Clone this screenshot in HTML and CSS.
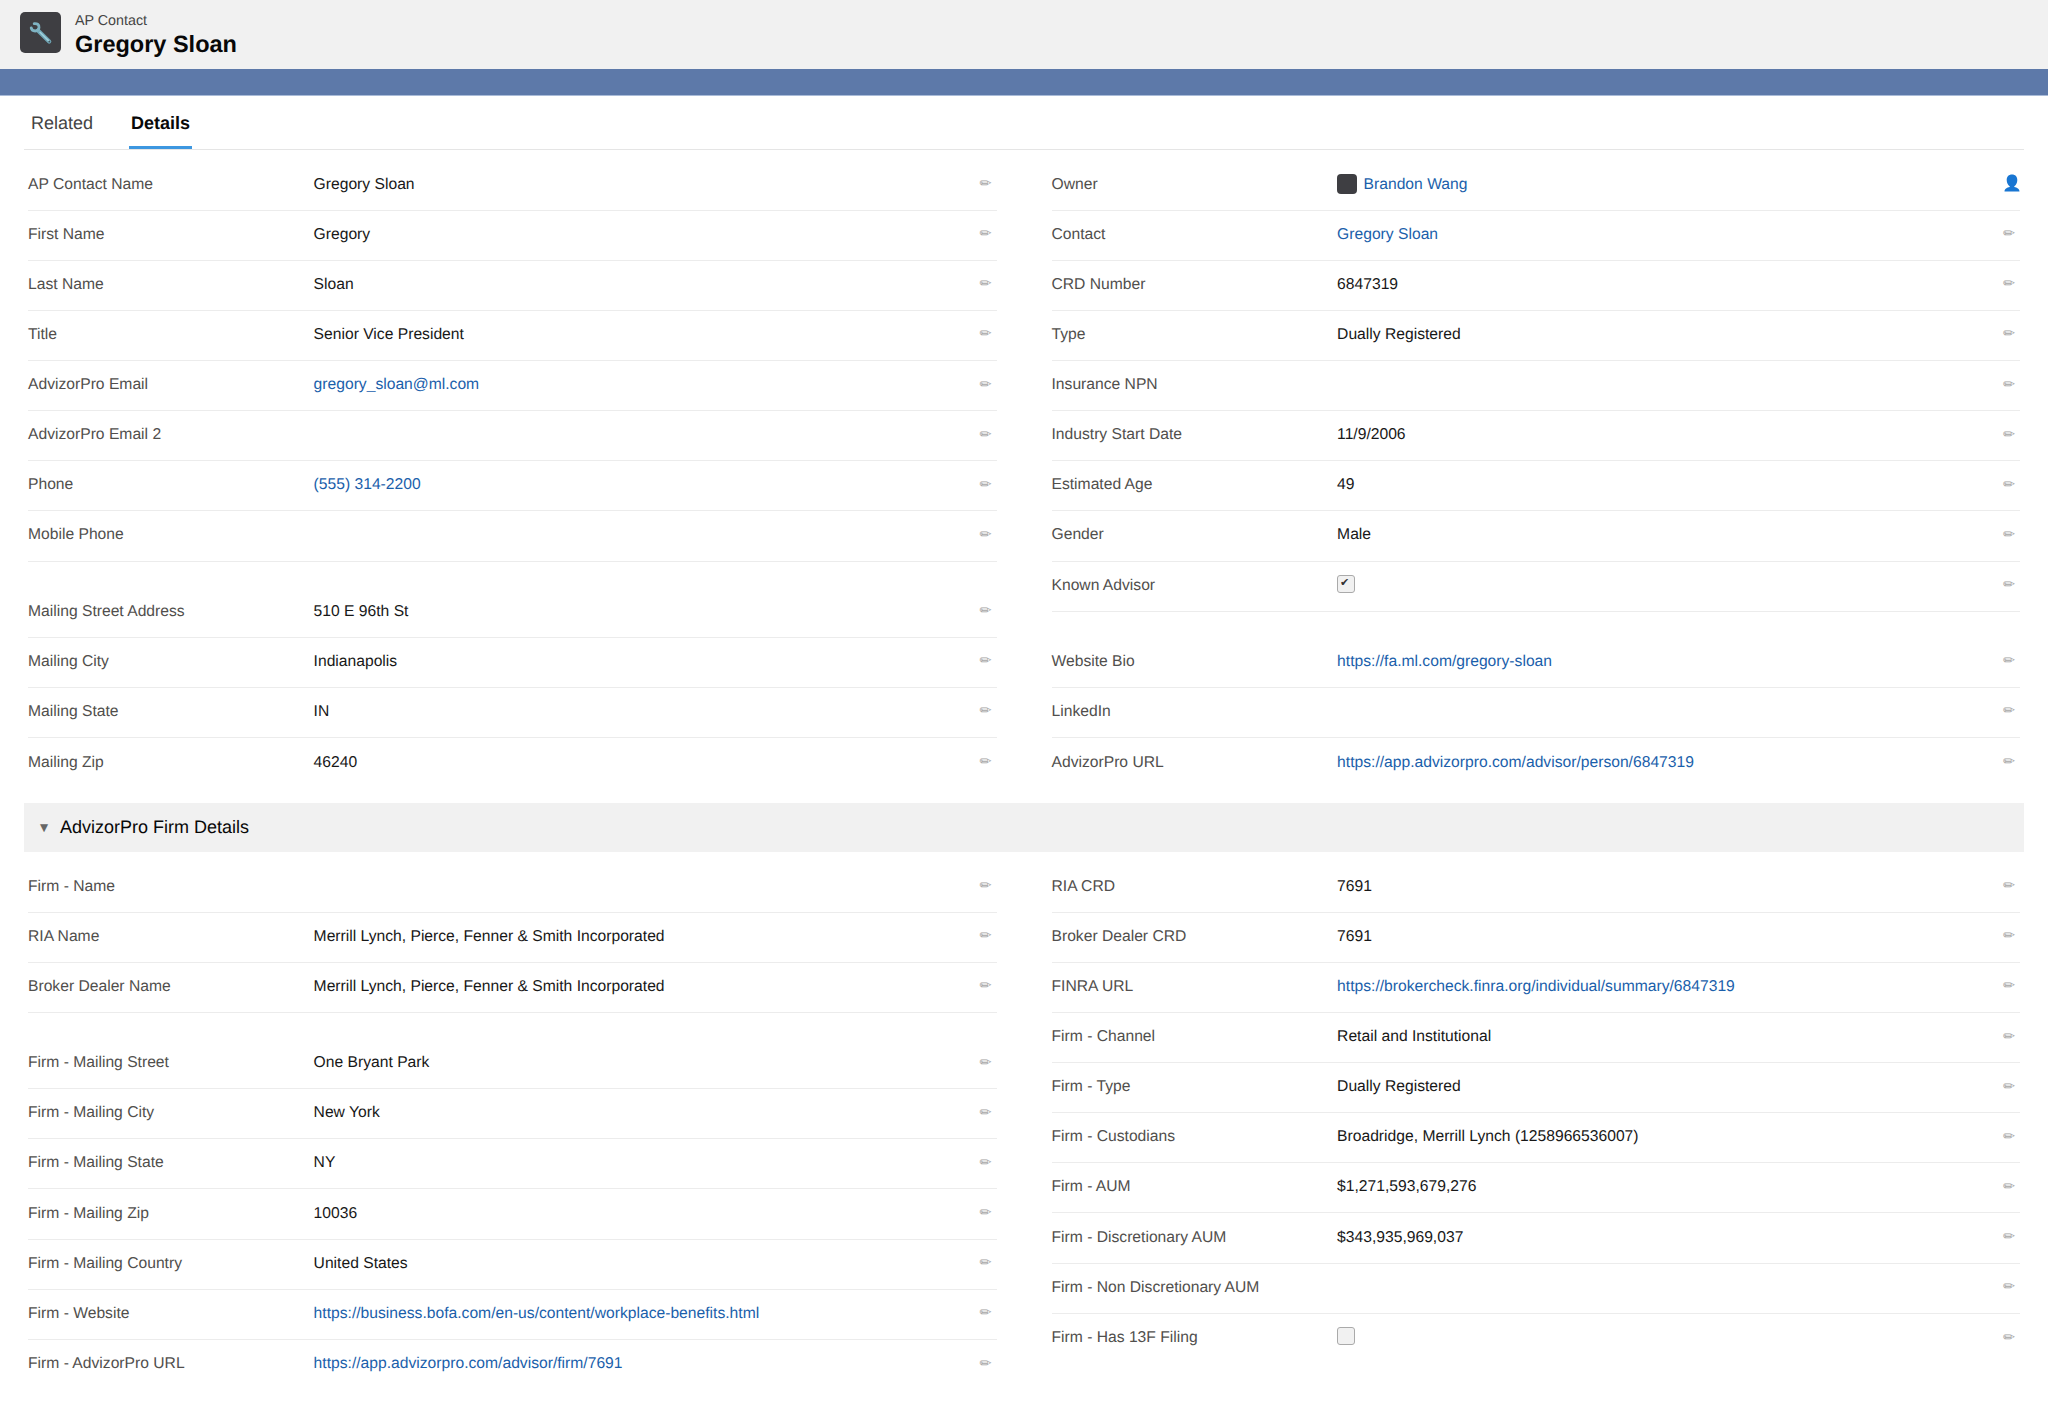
FILE: index.html
```html
<!DOCTYPE html>
<html lang="en">
<head>
  <meta charset="UTF-8" />
  <meta name="viewport" content="width=device-width, initial-scale=1.0" />
  <title>Gregory Sloan | AP Contact</title>
  <link rel="stylesheet" href="styles.css">
</head>
<body>
  <header class="page-header">
    <div class="header-icon">
      <svg viewBox="0 0 24 24" width="24" height="24">
        <path d="M9 9.5 L20.2 20.5" stroke="#6fa5b5" stroke-width="4.2" stroke-linecap="round" />
        <path d="M11 11.3 L19.5 19.6" stroke="#9fd0dc" stroke-width="1.5" stroke-linecap="round" />
        <path d="M5.2 2.6 Q10.2 2.2 10 6.6 Q9.6 10 6.2 10 Q2.6 9.8 2.2 6.8" fill="none" stroke="#7fb4c3" stroke-width="2.8" stroke-linecap="round" />
        <circle cx="20.3" cy="20.6" r="0.9" fill="#45555c" />
      </svg>
    </div>
    <div>
      <div class="header-type">AP Contact</div>
      <h1>Gregory Sloan</h1>
    </div>
  </header>
  <div class="banner"></div>

  <main>
    <nav class="tabs">
      <a class="tab">Related</a>
      <a class="tab active">Details</a>
    </nav>

    <section class="columns">
      <div class="column">
        <div class="row"><span class="label">AP Contact Name</span><span class="value">Gregory Sloan</span><span class="edit">✏</span></div>
        <div class="row"><span class="label">First Name</span><span class="value">Gregory</span><span class="edit">✏</span></div>
        <div class="row"><span class="label">Last Name</span><span class="value">Sloan</span><span class="edit">✏</span></div>
        <div class="row"><span class="label">Title</span><span class="value">Senior Vice President</span><span class="edit">✏</span></div>
        <div class="row"><span class="label">AdvizorPro Email</span><a class="value">gregory_sloan@ml.com</a><span class="edit">✏</span></div>
        <div class="row"><span class="label">AdvizorPro Email 2</span><span class="value"></span><span class="edit">✏</span></div>
        <div class="row"><span class="label">Phone</span><a class="value">(555) 314-2200</a><span class="edit">✏</span></div>
        <div class="row"><span class="label">Mobile Phone</span><span class="value"></span><span class="edit">✏</span></div>
        <div class="spacer"></div>
        <div class="row"><span class="label">Mailing Street Address</span><span class="value">510 E 96th St</span><span class="edit">✏</span></div>
        <div class="row"><span class="label">Mailing City</span><span class="value">Indianapolis</span><span class="edit">✏</span></div>
        <div class="row"><span class="label">Mailing State</span><span class="value">IN</span><span class="edit">✏</span></div>
        <div class="row"><span class="label">Mailing Zip</span><span class="value">46240</span><span class="edit">✏</span></div>
      </div>
      <div class="column">
        <div class="row">
          <span class="label">Owner</span><a class="value owner"><span class="avatar"></span>Brandon Wang</a>
          <svg class="user-icon" viewBox="0 0 16 18" width="16" height="18">
            <path d="M8 0.5 C11.3 0.5 13.3 2.7 13.3 6 C13.3 8.8 12 11.2 10.3 12.2 L10.3 13 C13 13.6 15.5 14.6 15.5 17.6 L0.5 17.6 C0.5 14.6 3 13.6 5.7 13 L5.7 12.2 C4 11.2 2.7 8.8 2.7 6 C2.7 2.7 4.7 0.5 8 0.5 Z" fill="#1976d2" />
          </svg>
        </div>
        <div class="row"><span class="label">Contact</span><a class="value">Gregory Sloan</a><span class="edit">✏</span></div>
        <div class="row"><span class="label">CRD Number</span><span class="value">6847319</span><span class="edit">✏</span></div>
        <div class="row"><span class="label">Type</span><span class="value">Dually Registered</span><span class="edit">✏</span></div>
        <div class="row"><span class="label">Insurance NPN</span><span class="value"></span><span class="edit">✏</span></div>
        <div class="row"><span class="label">Industry Start Date</span><span class="value">11/9/2006</span><span class="edit">✏</span></div>
        <div class="row"><span class="label">Estimated Age</span><span class="value">49</span><span class="edit">✏</span></div>
        <div class="row"><span class="label">Gender</span><span class="value">Male</span><span class="edit">✏</span></div>
        <div class="row"><span class="label">Known Advisor</span><span class="value"><span class="checkbox">✔</span></span><span class="edit">✏</span></div>
        <div class="spacer"></div>
        <div class="row"><span class="label">Website Bio</span><a class="value">https://fa.ml.com/gregory-sloan</a><span class="edit">✏</span></div>
        <div class="row"><span class="label">LinkedIn</span><span class="value"></span><span class="edit">✏</span></div>
        <div class="row"><span class="label">AdvizorPro URL</span><a class="value">https://app.advizorpro.com/advisor/person/6847319</a><span class="edit">✏</span></div>
      </div>
    </section>

    <h2 class="section-title"><span class="arrow">▼</span>AdvizorPro Firm Details</h2>

    <section class="columns">
      <div class="column">
        <div class="row"><span class="label">Firm - Name</span><span class="value"></span><span class="edit">✏</span></div>
        <div class="row"><span class="label">RIA Name</span><span class="value">Merrill Lynch, Pierce, Fenner &amp; Smith Incorporated</span><span class="edit">✏</span></div>
        <div class="row"><span class="label">Broker Dealer Name</span><span class="value">Merrill Lynch, Pierce, Fenner &amp; Smith Incorporated</span><span class="edit">✏</span></div>
        <div class="spacer"></div>
        <div class="row"><span class="label">Firm - Mailing Street</span><span class="value">One Bryant Park</span><span class="edit">✏</span></div>
        <div class="row"><span class="label">Firm - Mailing City</span><span class="value">New York</span><span class="edit">✏</span></div>
        <div class="row"><span class="label">Firm - Mailing State</span><span class="value">NY</span><span class="edit">✏</span></div>
        <div class="row"><span class="label">Firm - Mailing Zip</span><span class="value">10036</span><span class="edit">✏</span></div>
        <div class="row"><span class="label">Firm - Mailing Country</span><span class="value">United States</span><span class="edit">✏</span></div>
        <div class="row"><span class="label">Firm - Website</span><a class="value">https://business.bofa.com/en-us/content/workplace-benefits.html</a><span class="edit">✏</span></div>
        <div class="row"><span class="label">Firm - AdvizorPro URL</span><a class="value">https://app.advizorpro.com/advisor/firm/7691</a><span class="edit">✏</span></div>
      </div>
      <div class="column">
        <div class="row"><span class="label">RIA CRD</span><span class="value">7691</span><span class="edit">✏</span></div>
        <div class="row"><span class="label">Broker Dealer CRD</span><span class="value">7691</span><span class="edit">✏</span></div>
        <div class="row"><span class="label">FINRA URL</span><a class="value">https://brokercheck.finra.org/individual/summary/6847319</a><span class="edit">✏</span></div>
        <div class="row"><span class="label">Firm - Channel</span><span class="value">Retail and Institutional</span><span class="edit">✏</span></div>
        <div class="row"><span class="label">Firm - Type</span><span class="value">Dually Registered</span><span class="edit">✏</span></div>
        <div class="row"><span class="label">Firm - Custodians</span><span class="value">Broadridge, Merrill Lynch (1258966536007)</span><span class="edit">✏</span></div>
        <div class="row"><span class="label">Firm - AUM</span><span class="value">$1,271,593,679,276</span><span class="edit">✏</span></div>
        <div class="row"><span class="label">Firm - Discretionary AUM</span><span class="value">$343,935,969,037</span><span class="edit">✏</span></div>
        <div class="row"><span class="label">Firm - Non Discretionary AUM</span><span class="value"></span><span class="edit">✏</span></div>
        <div class="row"><span class="label">Firm - Has 13F Filing</span><span class="value"><span class="checkbox"></span></span><span class="edit">✏</span></div>
      </div>
    </section>
  </main>
</body>
</html>
```

FILE: styles.css
```css
* {
  box-sizing: border-box;
}

body {
  margin: 0;
  background: #fff;
  color: #181818;
  font-family: "Liberation Sans", Arial, sans-serif;
  font-size: 15.67px;
  text-rendering: geometricPrecision;
}

.page-header {
  display: flex;
  gap: 14px;
  height: 69px;
  padding: 12px 20px 0;
  background: #f1f1f1;
}

.header-icon {
  display: flex;
  align-items: center;
  justify-content: center;
  width: 41px;
  height: 41px;
  border-radius: 5px;
  background: #3e3e42;
}

.header-type {
  padding-top: 1px;
  line-height: 17px;
  font-size: 14.3px;
  color: #444;
}

h1 {
  margin: 1px 0 0;
  font-size: 23.5px;
  line-height: 27px;
  color: #080808;
}

.banner {
  height: 27px;
  background: #5d79a9;
  border-bottom: 1px solid #a9bbd8;
}

main {
  padding: 0 24px;
}

.tabs {
  display: flex;
  gap: 24px;
  height: 54px;
  border-bottom: 1px solid #e5e5e5;
}

.tab {
  height: 53px;
  padding: 0 7px;
  line-height: 54px;
  font-size: 18px;
  color: #444;
}

.tab.active {
  padding: 0 2px;
  margin-left: 5px;
  border-bottom: 3px solid #3d97e0;
  font-weight: bold;
  color: #080808;
}

.columns {
  display: grid;
  grid-template-columns: 1fr 1fr;
  gap: 55px;
  padding: 10.5px 4px 15px;
}

.row {
  display: flex;
  align-items: center;
  height: 50.14px;
  padding: 0 5px 1px 0;
  border-bottom: 1px solid #ececec;
}

.row:last-child {
  border-bottom: none;
}

.spacer {
  height: 26.1px;
}

.label {
  width: 285.6px;
  color: #514f4d;
}

.value {
  flex: 1;
}

a.value {
  color: #1b5fab;
}

.edit {
  padding-bottom: 1px;
  font-family: "DejaVu Sans", sans-serif;
  font-size: 14.37px;
  color: #a5a5a5;
}

.owner {
  display: flex;
  align-items: center;
  gap: 6.5px;
}

.avatar {
  width: 20px;
  height: 20px;
  margin-bottom: 2px;
  border-radius: 4px;
  background: #3e3e42;
}

.user-icon {
  margin: 0 -5px 3px 0;
}

.checkbox {
  display: flex;
  align-items: center;
  width: 18px;
  height: 18px;
  margin-bottom: 4px;
  padding: 0 0 2px 2px;
  border: 1px solid #aaa;
  border-radius: 3px;
  background: #f1f1f1;
  font-family: "DejaVu Sans", sans-serif;
  font-size: 11px;
  color: #333;
}

.section-title {
  display: flex;
  align-items: center;
  height: 49px;
  margin: 0;
  padding: 0 16px;
  background: #f1f1f1;
  font-size: 18px;
  font-weight: normal;
  color: #080808;
}

.arrow {
  width: 20px;
  padding-top: 1px;
  font-family: "DejaVu Sans", sans-serif;
  font-size: 10.5px;
  color: #666;
}
```
